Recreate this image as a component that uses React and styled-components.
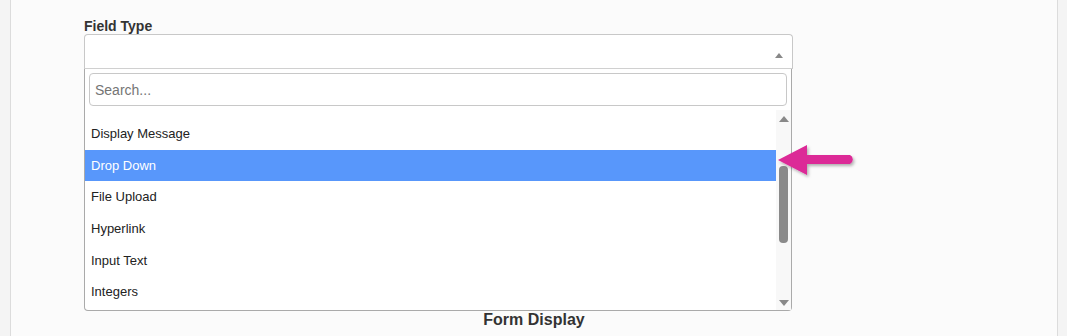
import React from 'react';
import styled, { createGlobalStyle } from 'styled-components';

const GlobalStyle = createGlobalStyle`
  html, body {
    margin: 0;
    padding: 0;
    background: #f4f4f4;
    font-family: "Liberation Sans", Arial, sans-serif;
  }
`;

const Page = styled.div`
  display: flex;
  height: 336px;
  padding-left: 10px;
  padding-right: 9px;
  overflow: hidden;
`;

const Panel = styled.div`
  flex: 1;
  background: #fbfbfb;
  border-left: 1px solid #dcdcdc;
  border-right: 1px solid #dcdcdc;
  padding: 18px 0 0 73px;
`;

const Label = styled.div`
  font-size: 14px;
  font-weight: bold;
  color: #333;
  line-height: 16px;
`;

const SelectWrap = styled.div`
  position: relative;
  width: 709px;
`;

const SelectBox = styled.div`
  height: 35px;
  background: #fff;
  border: 1px solid #c8c8c8;
  border-bottom-color: #d0d0d0;
  border-radius: 4px 4px 0 0;
  display: flex;
  align-items: center;
  justify-content: flex-end;
  padding-right: 9px;
  box-sizing: border-box;
`;

const Caret = styled.span`
  width: 0;
  height: 0;
  border-left: ${(p) => p.$size || 4}px solid transparent;
  border-right: ${(p) => p.$size || 4}px solid transparent;
  border-top: ${(p) => (p.$down ? `${(p.$size || 4) + 1}px solid #888` : '0')};
  border-bottom: ${(p) => (p.$down ? '0' : `${(p.$size || 4) + 1}px solid #888`)};
  margin-top: ${(p) => p.$offset || 0}px;
`;

const Dropdown = styled.div`
  position: absolute;
  top: 35px;
  left: 0;
  width: 708px;
  height: 242px;
  box-sizing: border-box;
  background: #fff;
  border: 1px solid #aaa;
  border-top: none;
  border-radius: 0 0 4px 4px;
  z-index: 5;
  display: flex;
  flex-direction: column;
`;

const SearchField = styled.input`
  margin: 4px 4px 0 4px;
  height: 33px;
  box-sizing: border-box;
  border: 1px solid #c8c8c8;
  border-radius: 4px;
  padding: 0 5px;
  font-family: "Liberation Sans", Arial, sans-serif;
  font-size: 14px;
  color: #333;
  outline: none;
  &::placeholder {
    color: #757575;
  }
`;

const ListArea = styled.div`
  flex: 1;
  margin-top: 4px;
  display: flex;
  overflow: hidden;
`;

const Options = styled.ul`
  list-style: none;
  margin: 0;
  padding: 8px 0 0 0;
  flex: 1;
`;

const Option = styled.li`
  height: 31.6px;
  display: flex;
  align-items: center;
  padding-left: 6px;
  font-size: 13px;
  color: ${(p) => (p.$active ? '#fff' : '#222')};
  background: ${(p) => (p.$active ? '#5897fb' : 'transparent')};
`;

const Scrollbar = styled.div`
  width: 15px;
  background: #f8f8f8;
  display: flex;
  flex-direction: column;
  align-items: center;
  padding: 6px 0 4px;
  box-sizing: border-box;
`;

const Thumb = styled.div`
  width: 9px;
  height: 77px;
  border-radius: 4px;
  background: #8a8a8a;
  margin-top: 44px;
`;

const Spacer = styled.div`
  flex: 1;
`;

const Pointer = styled.svg`
  position: absolute;
  left: 692px;
  top: 109px;
  overflow: visible;
  z-index: 6;
`;

const Heading = styled.div`
  margin-top: 242px;
  text-align: center;
  margin-left: -73px;
  font-size: 16px;
  font-weight: bold;
  color: #333;
  line-height: 18px;
`;

const items = ['Display Message', 'Drop Down', 'File Upload', 'Hyperlink', 'Input Text', 'Integers'];

export default function App() {
  return (
    <>
      <GlobalStyle />
      <Page>
        <Panel>
          <Label>Field Type</Label>
          <SelectWrap>
            <SelectBox>
              <Caret $offset={8} />
            </SelectBox>
            <Dropdown>
              <SearchField placeholder="Search..." />
              <ListArea>
                <Options>
                  {items.map((it) => (
                    <Option key={it} $active={it === 'Drop Down'}>
                      {it}
                    </Option>
                  ))}
                </Options>
                <Scrollbar>
                  <Caret $size={5} />
                  <Thumb />
                  <Spacer />
                  <Caret $size={5} $down />
                </Scrollbar>
              </ListArea>
            </Dropdown>
            <Pointer width="80" height="34" viewBox="0 0 80 34">
              <defs>
                <filter id="sh" x="-20%" y="-30%" width="150%" height="170%">
                  <feDropShadow dx="1.5" dy="2" stdDeviation="1.5" floodColor="#000" floodOpacity="0.3" />
                </filter>
              </defs>
              <g filter="url(#sh)">
                <path d="M2 17 L31 2 L31 12 L74 12 A5 5 0 0 1 74 21 L31 21 L31 32 Z" fill="#dc2a97" />
              </g>
            </Pointer>
          </SelectWrap>
          <Heading>Form Display</Heading>
        </Panel>
      </Page>
    </>
  );
}
